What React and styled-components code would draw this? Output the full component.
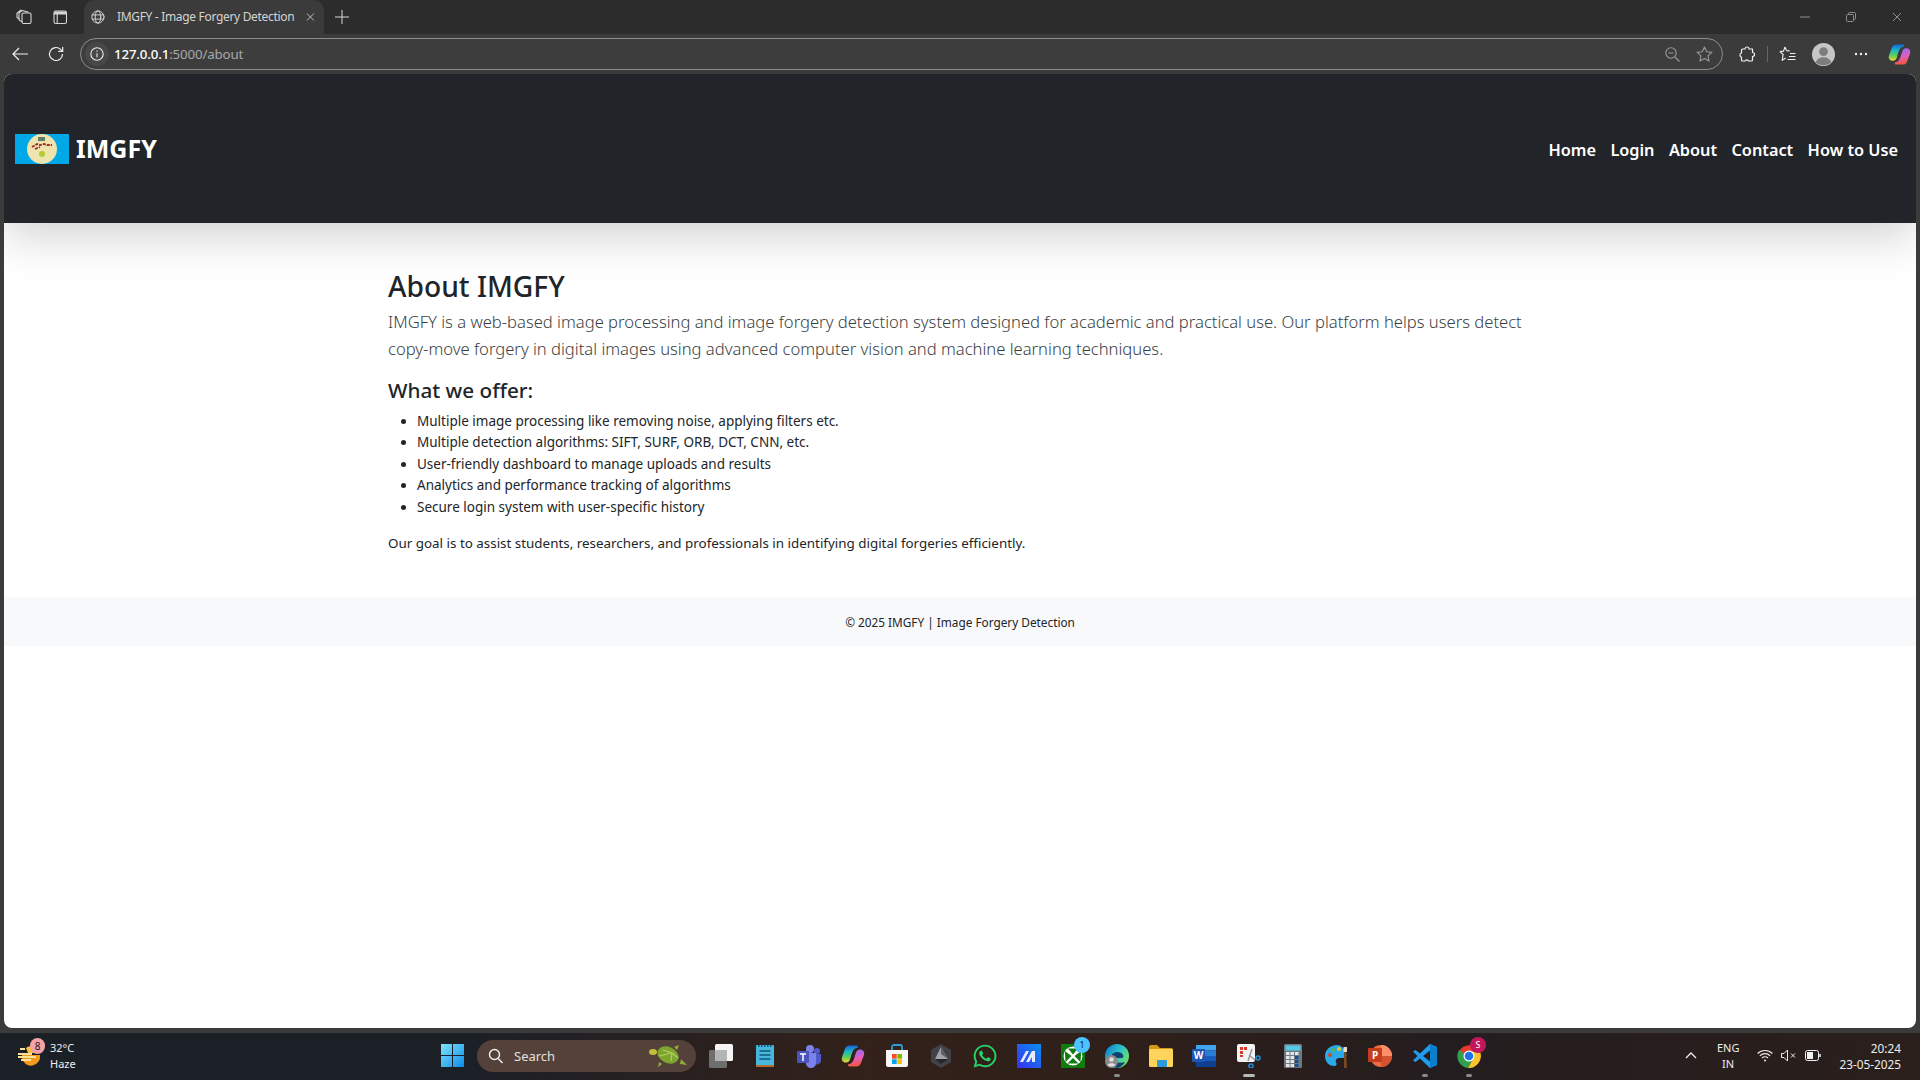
import React from 'react';
import styled, { createGlobalStyle } from 'styled-components';
import { FaWhatsapp } from 'react-icons/fa';

const GlobalStyle = createGlobalStyle`
  html, body {
    margin: 0;
    padding: 0;
    height: 100%;
    background: #3b3b3b;
    overflow: hidden;
  }
  #root { height: 100%; }
  * { box-sizing: border-box; }
`;

const UI_FONT = `"Noto Sans", "Open Sans", "Liberation Sans", sans-serif`;

const Screen = styled.div`
  width: 1920px;
  height: 1080px;
  display: flex;
  flex-direction: column;
  font-family: ${UI_FONT};
  background: #3b3b3b;
`;

/* browser chrome */
const TabStrip = styled.div`
  height: 34px;
  display: flex;
  align-items: center;
  background: #2c2c2c;
  color: #d6d6d6;
`;

const StripButton = styled.div`
  width: 36px;
  height: 34px;
  display: flex;
  align-items: center;
  justify-content: center;
`;

const StripLeft = styled.div`
  display: flex;
  padding-left: 6px;
  width: 84px;
`;

const Tab = styled.div`
  width: 240px;
  height: 34px;
  background: #3b3b3b;
  border-radius: 10px 10px 0 0;
  display: flex;
  align-items: center;
  gap: 12px;
  padding: 0 9px 0 7px;
  font-size: 12px;
  color: #d4d4d4;
  white-space: nowrap;
`;

const TabTitle = styled.span`
  flex: 1;
  letter-spacing: -0.32px;
  padding-bottom: 2px;
`;

const WindowControls = styled.div`
  margin-left: auto;
  display: flex;
`;

const WindowButton = styled.div`
  width: 46px;
  height: 34px;
  display: flex;
  align-items: center;
  justify-content: center;
`;

const Toolbar = styled.div`
  height: 40px;
  display: flex;
  align-items: center;
  padding-left: 2px;
`;

const ToolButton = styled.div`
  width: 36px;
  height: 32px;
  display: flex;
  align-items: center;
  justify-content: center;
`;

const AddressBar = styled.div`
  margin-left: 6px;
  width: 1643px;
  height: 32px;
  border: 1px solid #8d8d8d;
  border-radius: 16px;
  display: flex;
  align-items: center;
  padding: 0 2px 0 4px;
  font-size: 13.3px;
  background: #3d3d3d;
`;

const InfoChip = styled.div`
  width: 24px;
  height: 24px;
  border-radius: 50%;
  background: #484848;
  display: flex;
  align-items: center;
  justify-content: center;
  margin-right: 5px;
`;

const Url = styled.span`
  flex: 1;
  color: #a8a8a8;
  letter-spacing: -0.15px;
  b { color: #fff; font-weight: 500; }
`;

const AddressIcon = styled.div`
  width: 32px;
  display: flex;
  justify-content: center;
`;

const ToolActions = styled.div`
  display: flex;
  align-items: center;
  margin-left: 5px;
`;

const ActionButton = styled.div`
  width: ${p => p.$w || 36}px;
  height: 32px;
  display: flex;
  align-items: center;
  justify-content: center;
`;

const Separator = styled.div`
  width: 1px;
  height: 16px;
  background: #666;
  margin: 0 1px;
`;

/* the page */
const Viewport = styled.div`
  margin: 0 4px;
  height: 954px;
  background: #fff;
  border-radius: 8px;
  overflow: hidden;
  color: #212529;
`;

const Navbar = styled.nav`
  height: 149px;
  background: #212529;
  box-shadow: 0 14px 43px rgba(0, 0, 0, 0.175);
  display: flex;
  align-items: center;
  justify-content: space-between;
  padding: 0 18px 0 11px;
  position: relative;
`;

const Brand = styled.div`
  display: flex;
  align-items: center;
  gap: 7px;
  color: #fff;
  font-size: 25px;
  font-weight: 700;
  line-height: 30px;
`;

const BrandName = styled.span`
  position: relative;
  top: -1px;
`;

const NavLinks = styled.div`
  display: flex;
  gap: 14.4px;
  margin-top: 2px;
`;

const NavLink = styled.a`
  color: #fff;
  font-size: 16.3px;
  font-weight: 600;
`;

const Main = styled.main`
  width: 1144px;
  margin: 0 auto;
  padding-top: 44.5px;
  height: 374px;
  font-size: 13.5px;
  line-height: 21.6px;
`;

const Title = styled.h1`
  margin: 0 0 4.5px;
  font-size: 28.2px;
  line-height: 36px;
  font-weight: 500;
`;

const Lead = styled.p`
  margin: 0 0 14.5px;
  font-size: 16.6px;
  line-height: 27px;
  font-weight: 300;
  color: #3a3f44;
`;

const SubTitle = styled.h4`
  margin: 0 0 8px;
  font-size: 20.7px;
  line-height: 26px;
  font-weight: 500;
`;

const List = styled.ul`
  margin: 0 0 14.5px;
  padding-left: 29px;
`;

const Closing = styled.p`
  margin: 0;
  font-size: 13.4px;
`;

const Footer = styled.footer`
  height: 49px;
  padding-top: 1px;
  background: #f8f9fa;
  display: flex;
  align-items: center;
  justify-content: center;
  font-size: 11.8px;
`;

/* taskbar */
const Taskbar = styled.div`
  margin-top: 5px;
  height: 47px;
  padding-bottom: 2px;
  display: grid;
  grid-template-columns: 430px auto 1fr;
  align-items: center;
  background: linear-gradient(90deg, #1b2027 0%, #1b2027 24%, #33211a 45%, #2e1f1a 60%, #241d1f 75%, #2a1f1b 100%);
  color: #eee;
`;

const Weather = styled.div`
  display: flex;
  align-items: center;
  padding-left: 17px;
  gap: 7px;
`;

const WeatherIcon = styled.div`
  position: relative;
  width: 26px;
  height: 26px;
`;

const PinkBadge = styled.span`
  position: absolute;
  top: -5px;
  left: 13px;
  width: 15px;
  height: 16px;
  border-radius: 8px;
  background: #f6a0a8;
  color: #1b1b1b;
  font-size: 10px;
  line-height: 16px;
  text-align: center;
`;

const WeatherText = styled.div`
  font-size: 11px;
  line-height: 16px;
  color: #eee;
`;

const Center = styled.div`
  display: flex;
  align-items: center;
`;

const Slot = styled.div`
  position: relative;
  width: 44px;
  height: 45px;
  display: flex;
  align-items: center;
  justify-content: center;
  &::after {
    content: '';
    display: ${p => (p.$run ? 'block' : 'none')};
    position: absolute;
    bottom: 1px;
    left: 50%;
    transform: translateX(-50%);
    width: ${p => (p.$active ? 12 : 6)}px;
    height: 3px;
    border-radius: 2px;
    background: ${p => (p.$active ? '#b8b8b8' : '#8a8a8a')};
  }
`;

const Search = styled.div`
  width: 219px;
  height: 32px;
  margin: 0 3px;
  border-radius: 16px;
  background: #53413a;
  display: flex;
  align-items: center;
  padding: 0 6px 0 11px;
  gap: 10px;
  font-size: 13px;
  color: #e4e0de;
`;

const SearchLabel = styled.span`
  flex: 1;
`;

const CountBadge = styled.span`
  position: absolute;
  top: 4px;
  right: 5px;
  width: 16px;
  height: 16px;
  border-radius: 50%;
  background: ${p => p.$bg};
  color: ${p => p.$fg};
  font-size: 9px;
  line-height: 16px;
  text-align: center;
`;

const Tray = styled.div`
  display: flex;
  align-items: center;
  justify-content: flex-end;
  padding-right: 19px;
`;

const TrayText = styled.div`
  font-size: ${p => p.$size || 11}px;
  line-height: 16px;
  text-align: ${p => p.$align || 'center'};
  color: #eee;
  margin: ${p => p.$margin || '0'};
`;

const TrayIcon = styled.div`
  width: 24px;
  display: flex;
  justify-content: center;
`;

/* icons */
const Stroke = ({ size = 16, color = '#d6d6d6', sw = 1.1, children }) => (
  <svg width={size} height={size} viewBox="0 0 16 16" fill="none" stroke={color} strokeWidth={sw} strokeLinecap="round" strokeLinejoin="round">
    {children}
  </svg>
);

const WorkspaceIcon = () => (
  <Stroke>
    <rect x="6" y="4" width="9" height="10.5" rx="1.5" />
    <path d="M6 12.5 3.6 11.4A1.5 1.5 0 0 1 3 10V4l3-2.5 6 1.5" />
    <path d="M3.4 10 1 8.6V4.2L5 1" />
  </Stroke>
);
const TabsIcon = () => (
  <Stroke>
    <rect x="2" y="2" width="12.5" height="12.5" rx="1.8" />
    <path d="M2 5h12.5M5.2 5v9.5" />
    <path d="M2.5 2.5h11.5V5H2.5z" fill="#d6d6d6" stroke="none" />
  </Stroke>
);
const GlobeIcon = () => (
  <Stroke>
    <circle cx="8" cy="8" r="7" />
    <ellipse cx="8" cy="8" rx="3.2" ry="7" />
    <path d="M1.4 5.6h13.2M1.4 10.4h13.2" />
  </Stroke>
);
const CloseIcon = ({ size = 10, color = '#cfcfcf' }) => (
  <svg width={size} height={size} viewBox="0 0 10 10" stroke={color} strokeWidth="1">
    <path d="M1 1l8 8M9 1l-8 8" />
  </svg>
);
const PlusIcon = () => (
  <svg width="14" height="14" viewBox="0 0 14 14" stroke="#d6d6d6" strokeWidth="1"><path d="M7 0v14M0 7h14" /></svg>
);
const MinIcon = () => (
  <svg width="10" height="10" viewBox="0 0 10 10" stroke="#8e8e8e"><path d="M0 5h10" /></svg>
);
const RestoreIcon = () => (
  <svg width="10" height="10" viewBox="0 0 10 10" fill="none" stroke="#8e8e8e"><rect x="0.5" y="2.5" width="7" height="7" rx="1" /><path d="M2.5 2.5V1.5a1 1 0 0 1 1-1h5a1 1 0 0 1 1 1v5a1 1 0 0 1-1 1h-1" /></svg>
);
const BackIcon = () => (
  <svg width="16" height="14" viewBox="0 0 16 14" fill="none" stroke="#f0f0f0" strokeWidth="1.2"><path d="M16 7H1M7 1 1 7l6 6" /></svg>
);
const ReloadIcon = () => (
  <svg width="16" height="16" viewBox="0 0 16 16" fill="none" stroke="#f0f0f0" strokeWidth="1.2"><path d="M14.5 8A6.5 6.5 0 1 1 12.6 3.4L14.5 5.2" /><path d="M14.7 1v4.4h-4.4" /></svg>
);
const InfoIcon = () => (
  <svg width="14" height="14" viewBox="0 0 14 14" fill="none" stroke="#ececec" strokeWidth="1.1"><circle cx="7" cy="7" r="6.2" /><path d="M7 6.2v4M7 3.6v1.1" /></svg>
);
const ZoomOutIcon = () => (
  <svg width="15" height="15" viewBox="0 0 15 15" fill="none" stroke="#9a9a9a" strokeWidth="1.1"><circle cx="6" cy="6" r="5.2" /><path d="M3.5 6h5M10 10l4.5 4.5" /></svg>
);
const StarIcon = ({ color = '#9a9a9a' }) => (
  <svg width="17" height="16" viewBox="0 0 17 16" fill="none" stroke={color} strokeWidth="1.1" strokeLinejoin="round"><path d="M8.5 1l2.2 4.8 5.2.6-3.9 3.5 1.1 5.1-4.6-2.6-4.6 2.6 1.1-5.1L1.1 6.4l5.2-.6z" /></svg>
);
const PuzzleIcon = () => (
  <svg width="16" height="16" viewBox="0 0 16 16" fill="none" stroke="#f2f2f2" strokeWidth="1.2" strokeLinejoin="round"><path d="M6 3a2 2 0 0 1 4 0h3.5v3.5a2 2 0 0 1 0 4V14a1 1 0 0 1-1 1H9.5a1.8 1.8 0 0 0-3.4 0H3.5a1 1 0 0 1-1-1v-2.8a2.2 2.2 0 0 1 0-4.2V4a1 1 0 0 1 1-1z" /></svg>
);
const FavsIcon = () => (
  <svg width="17" height="16" viewBox="0 0 17 16" fill="none" stroke="#f2f2f2" strokeWidth="1.1" strokeLinejoin="round"><path d="M6 1l1.6 3.6 3 .3M.9 5.6l3.2 2.9-.9 5.900L6.600 12M.9 5.600l3.600-.5L6 1M11 7.500h5.500M10 10.500h6.500M8.500 13.500h8" /></svg>
);
const AvatarIcon = () => (
  <svg width="23" height="23" viewBox="0 0 23 23"><circle cx="11.5" cy="11.5" r="11.5" fill="#c8c6c4" /><circle cx="11.5" cy="8.6" r="4.4" fill="#7f7d7b" /><path d="M3.6 19.2c1.5-3.6 4.4-5 7.9-5s6.4 1.4 7.9 5a11.5 11.5 0 0 1-15.800 0z" fill="#7f7d7b" /></svg>
);
const DotsIcon = () => (
  <svg width="14" height="4" viewBox="0 0 14 4" fill="#f2f2f2"><circle cx="2" cy="2" r="1.2" /><circle cx="7" cy="2" r="1.2" /><circle cx="12" cy="2" r="1.2" /></svg>
);
const CopilotIcon = ({ id, size = 23 }) => (
  <svg width={size} height={size} viewBox="0 0 24 24">
    <defs>
      <linearGradient id={`${id}a`} x1="0.3" y1="0" x2="0.3" y2="1">
        <stop offset="0" stopColor="#1565d8" /><stop offset="0.35" stopColor="#17b5c8" /><stop offset="0.7" stopColor="#62cf55" /><stop offset="1" stopColor="#f4d52f" />
      </linearGradient>
      <linearGradient id={`${id}b`} x1="0.4" y1="0" x2="0.6" y2="1">
        <stop offset="0" stopColor="#8f6cf2" /><stop offset="0.5" stopColor="#e05fc0" /><stop offset="1" stopColor="#f5562e" />
      </linearGradient>
    </defs>
    <path d="M8.500 1.500h7c1.200 0 1.800 1 1.300 2.200C12 4 11 9 9.500 14c-.8 3-2 4.500-4.500 4.500-3.400 0-4.800-2.500-4-5.500L4 5c.8-2.300 2.300-3.500 4.500-3.500z" fill={`url(#${id}a)`} />
    <path d="M15.500 22.500h-7c-1.200 0-1.800-1-1.300-2.200C12 20 13 15 14.500 10c.8-3 2-4.500 4.500-4.500 3.400 0 4.800 2.500 4 5.500l-3 8c-.8 2.300-2.300 3.500-4.500 3.500z" fill={`url(#${id}b)`} />
  </svg>
);
const LogoImage = () => (
  <svg width="54" height="30" viewBox="0 0 54 30">
    <rect width="54" height="30" fill="#00a8e8" />
    <circle cx="27" cy="15" r="15" fill="#efe3ae" />
    <rect x="23" y="3" width="7" height="4" fill="#5f7f6a" />
    <path d="M17 13l5-3 3 1 4-1 3 1 5 0M20 15l5-2" stroke="#a22a2a" strokeWidth="1.800" fill="none" strokeDasharray="3 1" />
    <circle cx="27" cy="20" r="3" fill="#a8cf3a" />
    <circle cx="28" cy="18.500" r="1.200" fill="#e6b520" />
  </svg>
);

const SunIcon = () => (
  <svg width="26" height="26" viewBox="0 0 26 26">
    <path d="M5 15a9 9 0 0 0 18-3H5z" fill="#f59a1f" />
    <path d="M9 5a9 9 0 0 1 14 5H11z" fill="#fbc040" />
    <path d="M3 6h5M1 11h14M1 14h18M4 17h10" stroke="#fde39a" strokeWidth="1.800" />
  </svg>
);
const StartIcon = () => (
  <svg width="23" height="23" viewBox="0 0 23 23">
    <defs><linearGradient id="st" x1="0" y1="0" x2="1" y2="1"><stop offset="0" stopColor="#7fe3f8" /><stop offset="1" stopColor="#0d8bea" /></linearGradient></defs>
    <path d="M0 0h11v11H0zM12 0h11v11H12zM0 12h11v11H0zM12 12h11v11H12z" fill="url(#st)" />
  </svg>
);
const SearchIcon = () => (
  <svg width="16" height="16" viewBox="0 0 16 16" fill="none" stroke="#f2f2f2" strokeWidth="1.400"><circle cx="6.500" cy="6.500" r="5" /><path d="M10.200 10.500 14.500 15" /></svg>
);
const TurtleIcon = () => (
  <svg width="42" height="24" viewBox="0 0 42 24">
    <ellipse cx="20" cy="11" rx="11" ry="8" fill="#7da52f" transform="rotate(25 20 11)" />
    <path d="M15 6l9 3-1 8M11 12l12-3M24 9l6 5" stroke="#b4cf62" strokeWidth="1.200" fill="none" />
    <ellipse cx="5" cy="8" rx="4" ry="3" fill="#c2bd3a" />
    <path d="M11 18l-1 5 4-3zM33 15l6 6-7-1zM26 3l5-2-2 5z" fill="#8fae38" />
  </svg>
);
const TaskViewIcon = () => (
  <svg width="24" height="24" viewBox="0 0 24 24"><rect x="0" y="6" width="18" height="18" rx="1.500" fill="#6e6e6e" /><rect x="6" y="0" width="18" height="17" rx="1.500" fill="#f4f4f4" /><rect x="6" y="6" width="12" height="11" fill="#b4b4b4" /></svg>
);
const NotepadIcon = () => (
  <svg width="20" height="24" viewBox="0 0 20 24"><rect x="1" y="1" width="18" height="22" rx="1" fill="#47b7dd" /><rect x="1" y="21" width="18" height="2" fill="#b66a2e" /><path d="M4.500 7h11M4.500 11h11M4.500 15h11" stroke="#0e5878" strokeWidth="1.600" /><path d="M3 2h14" stroke="#0e5878" strokeWidth="2" strokeDasharray="1.500 1.500" /></svg>
);
const TeamsIcon = () => (
  <svg width="24" height="24" viewBox="0 0 24 24">
    <circle cx="13" cy="5" r="4" fill="#7b83eb" /><circle cx="20" cy="7" r="3" fill="#5059c9" />
    <path d="M17 10h7v7a4 4 0 0 1-7 2z" fill="#5059c9" />
    <path d="M7 9h12v9a5 5 0 0 1-10 2z" fill="#7b83eb" />
    <rect x="0" y="7" width="12" height="12" rx="1" fill="#4b53bc" />
    <path d="M3 10h6M6 10v7" stroke="#fff" strokeWidth="1.500" />
  </svg>
);
const StoreIcon = () => (
  <svg width="24" height="24" viewBox="0 0 24 24">
    <path d="M7 7V3a2 2 0 0 1 2-2h6a2 2 0 0 1 2 2v4" fill="none" stroke="#2a9fd8" strokeWidth="1.800" />
    <path d="M1 6h22v15a2 2 0 0 1-2 2H3a2 2 0 0 1-2-2z" fill="#f6f6f6" />
    <rect x="7" y="10" width="4.700" height="4.700" fill="#f25022" /><rect x="12.300" y="10" width="4.700" height="4.700" fill="#7fba00" />
    <rect x="7" y="15.300" width="4.700" height="4.700" fill="#00a4ef" /><rect x="12.300" y="15.300" width="4.700" height="4.700" fill="#ffb900" />
  </svg>
);
const HexIcon = () => (
  <svg width="22" height="24" viewBox="0 0 22 24">
    <path d="M11 0l10 6v12l-10 6-10-6V6z" fill="#3f4247" />
    <path d="M11 3l7 12H5z" fill="#a0a3a9" />
    <path d="M11 3l7 12-7-5z" fill="#5d6066" />
    <path d="M5 15h13l-7 5z" fill="#24262a" />
  </svg>
);
const MlIcon = () => (
  <svg width="24" height="24" viewBox="0 0 24 24">
    <defs><linearGradient id="ml" x1="0" y1="1" x2="1" y2="0"><stop offset="0" stopColor="#3a2ff0" /><stop offset="1" stopColor="#0a8ff0" /></linearGradient></defs>
    <rect width="24" height="24" fill="url(#ml)" />
    <path d="M3 18 9 7h3L6 18zM9 18l6-11h3v11h-3v-5l-3 5z" fill="#e8ecff" />
  </svg>
);
const XboxIcon = () => (
  <svg width="24" height="24" viewBox="0 0 24 24">
    <rect width="24" height="24" fill="#107c10" />
    <circle cx="12" cy="12" r="9.500" fill="#fff" />
    <path d="M12 10.500 7 4.500h10zM10.500 12 4.500 18 3.800 7zM13.500 12 19.500 18 20.200 7zM12 14l-5.500 5.500h11z" fill="#107c10" />
  </svg>
);
const EdgeIcon = () => (
  <svg width="24" height="24" viewBox="0 0 24 24">
    <defs><linearGradient id="ed" x1="0" y1="0" x2="1" y2="0.6"><stop offset="0" stopColor="#0c74c9" /><stop offset="0.6" stopColor="#2fc4c9" /><stop offset="1" stopColor="#6fdc6a" /></linearGradient></defs>
    <circle cx="12" cy="12" r="12" fill="url(#ed)" />
    <path d="M6 13c1-5 9-7 12-2 1 2 0 3-2 3H9c0 4 6 6 11 4a12 12 0 0 1-8 6C7 23 4 18 6 13z" fill="#123f6e" />
    <circle cx="6.500" cy="17.500" r="6.500" fill="#8b8b8b" />
    <circle cx="6.500" cy="15.500" r="2.300" fill="#dedede" /><path d="M2.500 21c1-2.500 7-2.500 8 0a6 6 0 0 1-8 0z" fill="#dedede" />
  </svg>
);
const FolderIcon = () => (
  <svg width="24" height="22" viewBox="0 0 24 22">
    <path d="M0 2a2 2 0 0 1 2-2h6l3 3h11a2 2 0 0 1 2 2v4H0z" fill="#d29a12" />
    <rect x="0" y="4" width="24" height="18" rx="1.500" fill="#fdd35b" />
    <rect x="8" y="15" width="10" height="7" rx="1" fill="#2a9ad8" />
  </svg>
);
const WordTile = styled.span`
  position: absolute;
  left: 9px;
  top: 16px;
  width: 13px;
  height: 13px;
  background: #1d57b4;
  color: #fff;
  font-size: 10px;
  font-weight: 700;
  line-height: 13px;
  text-align: center;
  border-radius: 1px;
`;
const WordIcon = () => (
  <svg width="22" height="22" viewBox="0 0 22 22">
    <rect x="2" y="0" width="20" height="5.500" fill="#41a5ee" /><rect x="2" y="5.500" width="20" height="5.500" fill="#2b7cd3" />
    <rect x="2" y="11" width="20" height="5.500" fill="#185abd" /><rect x="2" y="16.500" width="20" height="5.500" fill="#103f91" />
  </svg>
);
const SnipIcon = () => (
  <svg width="24" height="24" viewBox="0 0 24 24">
    <rect x="0" y="0" width="18" height="18" rx="2" fill="#f4f4f4" />
    <path d="M3 3h3v3H3zM7 3h3v3H7zM3 7h3v3H3zM3 11h3v2H3z" fill="#d83b2b" />
    <path d="M11 17 15 5M12 11l6 5" stroke="#9a9a9a" strokeWidth="1.500" />
    <circle cx="21" cy="14" r="2" fill="none" stroke="#1f8fd8" strokeWidth="1.500" />
    <circle cx="14" cy="22" r="2" fill="none" stroke="#1f8fd8" strokeWidth="1.500" />
  </svg>
);
const CalcIcon = () => (
  <svg width="18" height="24" viewBox="0 0 18 24">
    <rect width="18" height="24" rx="1.500" fill="#6d7a86" />
    <rect x="1.500" y="1.500" width="15" height="5" fill="#56c9e5" />
    {[8, 12, 16, 20].map(y => [2, 6.5, 11].map(x => (
      <rect key={`${x}-${y}`} x={x} y={y} width="3.500" height="3" fill={x === 11 && y > 11 ? '#14508c' : '#e6e6e6'} />
    )))}
  </svg>
);
const PaintIcon = () => (
  <svg width="24" height="24" viewBox="0 0 24 24">
    <path d="M12 1C5 1 0 6 0 12s4 10 9 10c3 0 3-2 2-4s1-4 4-4h3c3 0 4-2 3-5-1-4-5-8-9-8z" fill="#29a9e8" />
    <circle cx="5" cy="11" r="2" fill="#d8452e" /><circle cx="8" cy="6" r="2" fill="#4eb84a" /><circle cx="14" cy="5" r="2" fill="#f2c230" />
    <path d="M19 7l2 0 1 17h-3z" fill="#7a4a22" /><rect x="18.500" y="3" width="3.500" height="5" fill="#e8dcc0" />
  </svg>
);
const PptTile = styled.span`
  position: absolute;
  left: 9px;
  top: 15px;
  width: 14px;
  height: 14px;
  background: #c43e1c;
  color: #fff;
  font-size: 10px;
  font-weight: 700;
  line-height: 14px;
  text-align: center;
  border-radius: 1px;
`;
const PptIcon = () => (
  <svg width="22" height="22" viewBox="0 0 22 22">
    <circle cx="11" cy="11" r="11" fill="#ed6c47" />
    <path d="M11 0a11 11 0 0 1 11 11H11z" fill="#ff8f6b" />
    <path d="M11 11h11a11 11 0 0 1-11 11z" fill="#d35230" />
  </svg>
);
const VscodeIcon = () => (
  <svg width="24" height="24" viewBox="0 0 24 24">
    <path d="M17 0l7 3v18l-7 3-10-9.500L2.500 18 0 16.500 4.500 12 0 7.500 2.500 6 7 9.500zM17 6.500 10 12l7 5.500z" fill="#1f9cf0" />
    <path d="M17 0l7 3v18l-7 3V17.500L17 6.500z" fill="#0a7fd0" />
  </svg>
);
const ChromeIcon = () => (
  <svg width="24" height="24" viewBox="0 0 24 24">
    <path d="M12 12 2 7.500A12 12 0 0 1 23 7.500H12z" fill="#e33b2e" />
    <path d="M12 12 2 6a12 12 0 0 0 9 18l5-9z" fill="#30a04e" />
    <path d="M12 7.500h11A12 12 0 0 1 11 24l6-11z" fill="#f9c22e" />
    <circle cx="12" cy="12" r="5.500" fill="#fff" /><circle cx="12" cy="12" r="4.300" fill="#1a73e8" />
  </svg>
);
const ChevronIcon = () => (
  <svg width="12" height="7" viewBox="0 0 12 7" fill="none" stroke="#f0f0f0" strokeWidth="1.300"><path d="M1 6l5-5 5 5" /></svg>
);
const WifiIcon = () => (
  <svg width="16" height="13" viewBox="0 0 16 13" fill="none" stroke="#f0f0f0" strokeWidth="1.100"><path d="M.6 4.500a10.500 10.500 0 0 1 14.800 0M2.800 6.800a7.300 7.300 0 0 1 10.400 0M5 9a4.200 4.200 0 0 1 6 0" /><circle cx="8" cy="11.500" r="1" fill="#f0f0f0" stroke="none" /></svg>
);
const MuteIcon = () => (
  <svg width="16" height="13" viewBox="0 0 16 13" fill="none" stroke="#f0f0f0" strokeWidth="1"><path d="M.5 4.500h2.500L6.500 1v11L3 8.500H.5zM10 4.500l4 4M14 4.500l-4 4" /></svg>
);
const BatteryIcon = () => (
  <svg width="16" height="11" viewBox="0 0 16 11" fill="none" stroke="#f0f0f0"><rect x="0.500" y="0.500" width="13" height="10" rx="2" /><rect x="2" y="2" width="6" height="7" fill="#f0f0f0" stroke="none" /><path d="M15 4v3" strokeWidth="1.500" /></svg>
);

const offers = [
  'Multiple image processing like removing noise, applying filters etc.',
  'Multiple detection algorithms: SIFT, SURF, ORB, DCT, CNN, etc.',
  'User-friendly dashboard to manage uploads and results',
  'Analytics and performance tracking of algorithms',
  'Secure login system with user-specific history',
];

const navItems = ['Home', 'Login', 'About', 'Contact', 'How to Use'];

export default function App() {
  return (
    <>
      <GlobalStyle />
      <Screen>
        <TabStrip>
          <StripLeft>
            <StripButton><WorkspaceIcon /></StripButton>
            <StripButton><TabsIcon /></StripButton>
          </StripLeft>
          <Tab>
            <GlobeIcon />
            <TabTitle>IMGFY - Image Forgery Detection</TabTitle>
            <CloseIcon />
          </Tab>
          <StripButton><PlusIcon /></StripButton>
          <WindowControls>
            <WindowButton><MinIcon /></WindowButton>
            <WindowButton><RestoreIcon /></WindowButton>
            <WindowButton><CloseIcon color="#8e8e8e" /></WindowButton>
          </WindowControls>
        </TabStrip>

        <Toolbar>
          <ToolButton><BackIcon /></ToolButton>
          <ToolButton><ReloadIcon /></ToolButton>
          <AddressBar>
            <InfoChip><InfoIcon /></InfoChip>
            <Url><b>127.0.0.1</b>:5000/about</Url>
            <AddressIcon><ZoomOutIcon /></AddressIcon>
            <AddressIcon><StarIcon /></AddressIcon>
          </AddressBar>
          <ToolActions>
            <ActionButton $w={38}><PuzzleIcon /></ActionButton>
            <Separator />
            <ActionButton $w={36}><FavsIcon /></ActionButton>
            <ActionButton $w={37}><AvatarIcon /></ActionButton>
            <ActionButton $w={38}><DotsIcon /></ActionButton>
            <ActionButton $w={38}><CopilotIcon id="cp1" /></ActionButton>
          </ToolActions>
        </Toolbar>

        <Viewport>
          <Navbar>
            <Brand>
              <LogoImage />
              <BrandName>IMGFY</BrandName>
            </Brand>
            <NavLinks>
              {navItems.map(item => <NavLink key={item}>{item}</NavLink>)}
            </NavLinks>
          </Navbar>
          <Main>
            <Title>About IMGFY</Title>
            <Lead>
              IMGFY is a web-based image processing and image forgery detection system designed for academic and practical use. Our platform helps users detect copy-move forgery in digital images using advanced computer vision and machine learning techniques.
            </Lead>
            <SubTitle>What we offer:</SubTitle>
            <List>
              {offers.map(text => <li key={text}>{text}</li>)}
            </List>
            <Closing>Our goal is to assist students, researchers, and professionals in identifying digital forgeries efficiently.</Closing>
          </Main>
          <Footer>© 2025 IMGFY | Image Forgery Detection</Footer>
        </Viewport>

        <Taskbar>
          <Weather>
            <WeatherIcon>
              <SunIcon />
              <PinkBadge>8</PinkBadge>
            </WeatherIcon>
            <WeatherText>32°C<br />Haze</WeatherText>
          </Weather>
          <Center>
            <Slot><StartIcon /></Slot>
            <Search>
              <SearchIcon />
              <SearchLabel>Search</SearchLabel>
              <TurtleIcon />
            </Search>
            <Slot><TaskViewIcon /></Slot>
            <Slot><NotepadIcon /></Slot>
            <Slot><TeamsIcon /></Slot>
            <Slot><CopilotIcon id="cp2" size={24} /></Slot>
            <Slot><StoreIcon /></Slot>
            <Slot><HexIcon /></Slot>
            <Slot><FaWhatsapp size={26} color="#25d366" /></Slot>
            <Slot><MlIcon /></Slot>
            <Slot>
              <XboxIcon />
              <CountBadge $bg="#4cc2ff" $fg="#10242e">1</CountBadge>
            </Slot>
            <Slot $run><EdgeIcon /></Slot>
            <Slot><FolderIcon /></Slot>
            <Slot><WordIcon /><WordTile>W</WordTile></Slot>
            <Slot $run $active><SnipIcon /></Slot>
            <Slot><CalcIcon /></Slot>
            <Slot><PaintIcon /></Slot>
            <Slot><PptIcon /><PptTile>P</PptTile></Slot>
            <Slot $run><VscodeIcon /></Slot>
            <Slot $run>
              <ChromeIcon />
              <CountBadge $bg="#c2185b" $fg="#fff">S</CountBadge>
            </Slot>
          </Center>
          <Tray>
            <ChevronIcon />
            <TrayText $margin="0 14px 0 20px">ENG<br />IN</TrayText>
            <TrayIcon><WifiIcon /></TrayIcon>
            <TrayIcon><MuteIcon /></TrayIcon>
            <TrayIcon><BatteryIcon /></TrayIcon>
            <TrayText $align="right" $margin="0 0 0 14px" $size={11.8}>20:24<br />23-05-2025</TrayText>
          </Tray>
        </Taskbar>
      </Screen>
    </>
  );
}
